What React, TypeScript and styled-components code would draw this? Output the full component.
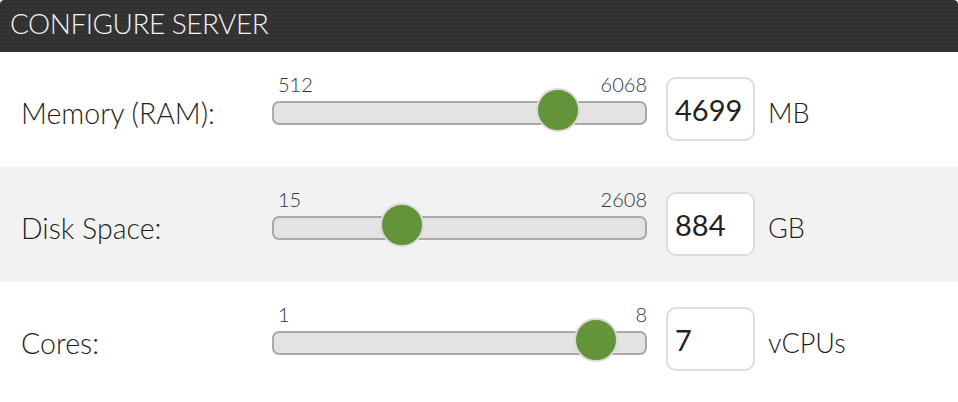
import React, { useState } from "react";
import styled, { createGlobalStyle } from "styled-components";

const GlobalStyle = createGlobalStyle`
  html, body { margin: 0; padding: 0; background: #ffffff; }
  body { font-family: Lato, "Open Sans", Arial, sans-serif; }
  * { box-sizing: border-box; }
`;

const Card = styled.div`
  width: 958px;
  height: 402px;
  background: #ffffff;
  border-radius: 4px;
  overflow: hidden;
`;

const Header = styled.div`
  height: 52px;
  display: flex;
  align-items: center;
  padding: 0 0 6px 10px;
  background-color: #313131;
  background-image: radial-gradient(rgba(255, 255, 255, 0.035) 1px, transparent 1px);
  background-size: 4px 4px;
  border-radius: 4px 4px 0 0;
`;

const Title = styled.h1`
  margin: 0;
  font-family: Lato, sans-serif;
  font-weight: 300;
  font-size: 28px;
  line-height: 28px;
  color: #f2f2f2;
  letter-spacing: -0.5px;
`;

const Row = styled.div<{ $shaded?: boolean }>`
  height: 115px;
  display: flex;
  align-items: flex-start;
  padding: 25px 0 0 21px;
  background: ${(p) => (p.$shaded ? "#f2f2f2" : "#ffffff")};
`;

const Label = styled.div`
  width: 251px;
  margin-top: 22px;
  font-family: Lato, sans-serif;
  font-weight: 300;
  font-size: 28.5px;
  line-height: 28px;
  color: #1e1e1e;
  white-space: nowrap;
`;

const SliderCol = styled.div`
  width: 375px;
  display: flex;
  flex-direction: column;
`;

const Bounds = styled.div`
  display: flex;
  justify-content: space-between;
  padding-left: 6px;
  margin-top: -3px;
  font-family: Lato, sans-serif;
  font-weight: 300;
  font-size: 20px;
  line-height: 20px;
  color: #333333;
`;

const Track = styled.div`
  position: relative;
  margin-top: 7px;
  height: 24px;
  background: #e3e3e3;
  border: 2px solid #a9a9a9;
  border-radius: 7px;
`;

const Thumb = styled.div`
  position: absolute;
  top: -15px;
  width: 44px;
  height: 44px;
  border-radius: 50%;
  background: #64943a;
  border: 2px solid #d9d9d9;
`;

const ValueBox = styled.input`
  margin-left: 19px;
  width: 89px;
  height: 64px;
  padding: 0 0 0 7px;
  border: 2px solid #dddddd;
  border-radius: 10px;
  background: #ffffff;
  font-family: Lato, sans-serif;
  font-weight: 400;
  font-size: 29px;
  color: #222222;
  outline: none;
`;

const Unit = styled.div`
  margin-left: 13px;
  margin-top: 22px;
  font-family: Lato, sans-serif;
  font-weight: 300;
  font-size: 27px;
  line-height: 28px;
  color: #1e1e1e;
`;

type Setting = {
  key: string;
  label: string;
  min: number;
  max: number;
  value: number;
  unit: string;
};

const initial: Setting[] = [
  { key: "ram", label: "Memory (RAM):", min: 512, max: 6068, value: 4699, unit: "MB" },
  { key: "disk", label: "Disk Space:", min: 15, max: 2608, value: 884, unit: "GB" },
  { key: "cores", label: "Cores:", min: 1, max: 8, value: 7, unit: "vCPUs" },
];

const INNER = 371;

export default function App() {
  const [settings, setSettings] = useState<Setting[]>(initial);

  const update = (key: string, v: string) => {
    const n = parseInt(v, 10);
    setSettings((s) =>
      s.map((it) => (it.key === key ? { ...it, value: isNaN(n) ? it.min : n } : it))
    );
  };

  return (
    <>
      <GlobalStyle />
      <Card>
        <Header>
          <Title>CONFIGURE SERVER</Title>
        </Header>
        {settings.map((s, i) => {
          const f = Math.min(1, Math.max(0, (s.value - s.min) / (s.max - s.min)));
          return (
            <Row key={s.key} $shaded={i === 1}>
              <Label>{s.label}</Label>
              <SliderCol>
                <Bounds>
                  <span>{s.min}</span>
                  <span>{s.max}</span>
                </Bounds>
                <Track>
                  <Thumb style={{ left: `${f * INNER - 18}px` }} />
                </Track>
              </SliderCol>
              <ValueBox value={String(s.value)} onChange={(e) => update(s.key, e.target.value)} />
              <Unit>{s.unit}</Unit>
            </Row>
          );
        })}
      </Card>
    </>
  );
}
